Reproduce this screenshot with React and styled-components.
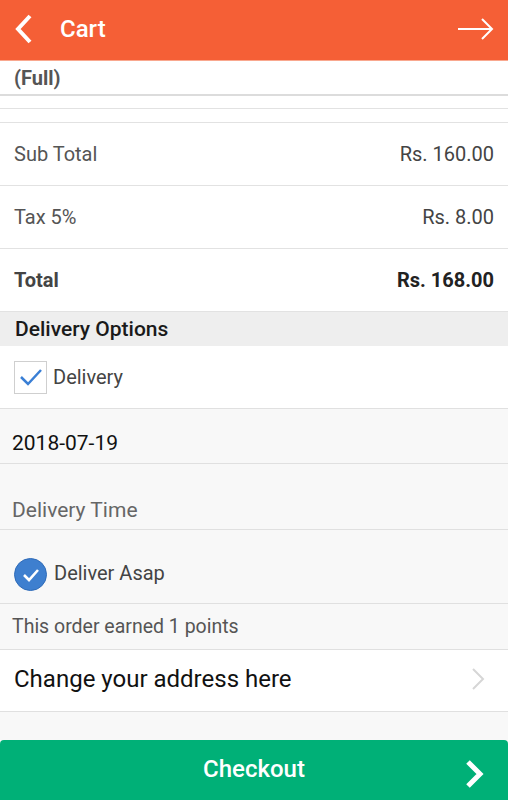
import React from 'react';
import styled, { createGlobalStyle } from 'styled-components';

const GlobalStyle = createGlobalStyle`
    body {
        margin: 0;
        font-family: Roboto, "Noto Sans", sans-serif;
        background: #f8f8f8;
    }
`

const Page = styled.div`
    width: 508px;
    height: 800px;
    display: flex;
    flex-direction: column;
    background: #f8f8f8;
    overflow: hidden;
`

const Header = styled.div`
    height: 60px;
    flex-shrink: 0;
    background: #f55f36;
    display: flex;
    align-items: center;
    padding: 0 13px 2px;
    box-sizing: border-box;
    color: #fff;

    .header__title {
        margin-left: 25px;
        font-size: 24px;
        font-weight: 500;
        flex: 1;
    }
`

const FullRow = styled.div`
    height: 33px;
    background: #fff;
    display: flex;
    align-items: center;
    padding: 0 14px;
    font-size: 20px;
    font-weight: 700;
    color: #555;
    border-top: 1px solid #f9a88f;
    border-bottom: 2px solid #dcdcdc;
`

const Spacer = styled.div`
    height: ${p => p.h}px;
    background: #fff;
    border-bottom: 1px solid #e2e2e2;
`

const SummaryRow = styled.div`
    height: 62px;
    background: #fff;
    display: flex;
    align-items: center;
    justify-content: space-between;
    padding: 0 14px;
    font-size: 20px;
    color: ${p => (p.bold ? '#222' : '#444')};
    font-weight: ${p => (p.bold ? 700 : 400)};
    border-bottom: 1px solid #e2e2e2;

    .label {
        color: ${p => (p.bold ? '#444' : '#555')};
    }
`

const SectionTitle = styled.div`
    height: 34px;
    background: #eeeeee;
    display: flex;
    align-items: center;
    padding: 0 14px 0 15px;
    font-size: 21px;
    font-weight: 500;
    color: #1a1a1a;
`

const OptionRow = styled.div`
    height: ${p => p.h}px;
    background: ${p => (p.white ? '#fff' : '#f8f8f8')};
    display: flex;
    align-items: ${p => p.align || 'center'};
    justify-content: ${p => p.justify || 'flex-start'};
    padding: ${p => p.pad || '0 14px'};
    font-size: ${p => p.size || 20}px;
    color: ${p => p.color || '#444'};
    border-bottom: 1px solid #e0e0e0;
    box-sizing: border-box;
`

const CheckBox = styled.div`
    width: 31px;
    height: 31px;
    border: 1px solid #cfcfcf;
    background: #fff;
    display: flex;
    align-items: center;
    justify-content: center;
    margin-right: 6px;
`

const RoundCheck = styled.div`
    width: 31px;
    height: 31px;
    border-radius: 50%;
    background: #3e7fcf;
    border: 1px solid #2f6bb8;
    display: flex;
    align-items: center;
    justify-content: center;
    margin-right: 7px;
`

const Gap = styled.div`
    flex: 1;
    background: #f8f8f8;
`

const CheckoutButton = styled.div`
    height: 60px;
    flex-shrink: 0;
    background: #00b077;
    border-radius: 4px 4px 0 0;
    display: flex;
    align-items: center;
    justify-content: center;
    position: relative;
    color: #fff;
    font-size: 24px;
    font-weight: 500;
    padding-bottom: 2px;
    box-sizing: border-box;

    svg {
        position: absolute;
        right: 22px;
        top: 19px;
    }
`

const App = () => {
    return (
        <Page>
            <GlobalStyle />
            <Header>
                <svg width="22" height="32" viewBox="0 0 22 32">
                    <path d="M17 3 L5 16 L17 29" fill="none" stroke="#fff" strokeWidth="4" />
                </svg>
                <div className="header__title">Cart</div>
                <svg width="38" height="24" viewBox="0 0 38 24">
                    <path d="M1 12 H35 M25 2 L35 12 L25 22" fill="none" stroke="#fff" strokeWidth="2" />
                </svg>
            </Header>
            <FullRow>(Full)</FullRow>
            <Spacer h={12} />
            <Spacer h={13} />
            <SummaryRow>
                <span className="label">Sub Total</span>
                <span>Rs. 160.00</span>
            </SummaryRow>
            <SummaryRow>
                <span className="label">Tax 5%</span>
                <span>Rs. 8.00</span>
            </SummaryRow>
            <SummaryRow bold>
                <span className="label">Total</span>
                <span>Rs. 168.00</span>
            </SummaryRow>
            <SectionTitle>Delivery Options</SectionTitle>
            <OptionRow h={63} white>
                <CheckBox>
                    <svg width="26" height="26" viewBox="0 0 26 26">
                        <path d="M3 13 L10 20 L23 6" fill="none" stroke="#3a7fd5" strokeWidth="2.5" />
                    </svg>
                </CheckBox>
                Delivery
            </OptionRow>
            <OptionRow h={55} align="flex-end" pad="0 12px 8px" size={21} color="#111">
                2018-07-19
            </OptionRow>
            <OptionRow h={66} align="flex-end" pad="0 12px 7px" size={21} color="#666">
                Delivery Time
            </OptionRow>
            <OptionRow h={74} align="flex-end" pad="0 14px 12px">
                <RoundCheck>
                    <svg width="22" height="22" viewBox="0 0 22 22">
                        <path d="M4 11 L9 16 L18 6" fill="none" stroke="#fff" strokeWidth="2.6" />
                    </svg>
                </RoundCheck>
                <span style={{ marginBottom: 6 }}>Deliver Asap</span>
            </OptionRow>
            <OptionRow h={46} pad="0 12px" size={19.5} color="#555">
                This order earned 1 points
            </OptionRow>
            <OptionRow h={62} white size={24} color="#111" justify="space-between" pad="0 14px 3px">
                <span>Change your address here</span>
                <svg width="16" height="26" viewBox="0 0 16 26" style={{ marginRight: 8 }}>
                    <path d="M3 3 L13 13 L3 23" fill="none" stroke="#d6d6d6" strokeWidth="2" />
                </svg>
            </OptionRow>
            <Gap />
            <CheckoutButton>
                Checkout
                <svg width="22" height="30" viewBox="0 0 22 30">
                    <path d="M4 3 L16 15 L4 27" fill="none" stroke="#fff" strokeWidth="5" />
                </svg>
            </CheckoutButton>
        </Page>
    );
};

export default App;
